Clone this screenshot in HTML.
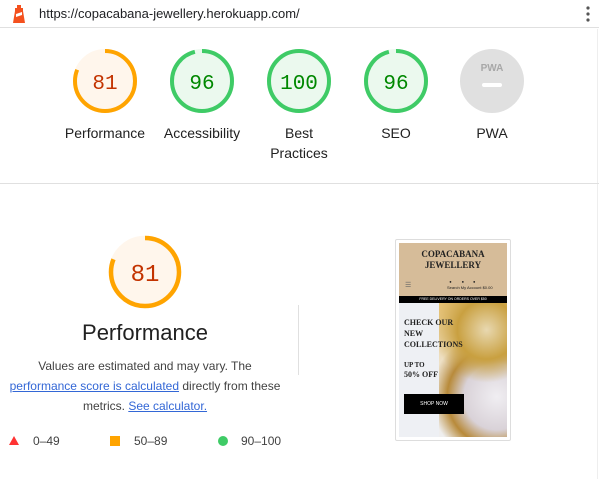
<!DOCTYPE html>
<html><head><meta charset="utf-8"><style>
*{margin:0;padding:0;box-sizing:border-box}
body{width:599px;height:479px;overflow:hidden;background:#fff;font-family:"Liberation Sans",Arial,sans-serif;position:relative;color:#212121}
.top{position:absolute;left:0;top:0;width:599px;height:28px;border-bottom:1px solid #e0e0e0}
.url{position:absolute;left:39px;top:6px;font-size:13px;color:#202124}
.abs{position:absolute}
.lbl{position:absolute;width:100px;text-align:center;font-size:14px;color:#212121;line-height:20px}
a{color:#3367d6}
</style></head><body>
<div class="top">
<svg class="abs" style="left:12px;top:5px" width="14" height="18" viewBox="0 0 14 18"><path d="M5 0h4v3h2v3H3V3h2z" fill="#f4511e"/><path d="M3 6h8l2 12H1z" fill="#f4511e"/><path d="M4 9l6-2v3l-6 2z" fill="#fff"/></svg>
<div class="url">https://copacabana-jewellery.herokuapp.com/</div>
<svg class="abs" style="left:586px;top:6px" width="4" height="16"><circle cx="2" cy="2" r="1.6" fill="#555"/><circle cx="2" cy="8" r="1.6" fill="#555"/><circle cx="2" cy="14" r="1.6" fill="#555"/></svg>
</div>
<div class="abs" style="left:597px;top:29px;width:1px;height:450px;background:#eee"></div>

<svg class="abs" style="left:0;top:0" width="599" height="479">
<g font-family="Liberation Mono, monospace" text-anchor="middle">
<circle cx="105" cy="81" r="30" fill="#fff6ec" stroke="#fff6ec" stroke-width="4"/>
<circle cx="105" cy="81" r="30" fill="none" stroke="#ffa400" stroke-width="4" stroke-dasharray="152.7 200" transform="rotate(-90 105 81)"/>
<text x="105" y="89" font-size="21" fill="#c33300">81</text>
<circle cx="202" cy="81" r="30" fill="#ebf9ee" stroke="#ebf9ee" stroke-width="4"/>
<circle cx="202" cy="81" r="30" fill="none" stroke="#3fcb66" stroke-width="4" stroke-dasharray="181 200" transform="rotate(-90 202 81)"/>
<text x="202" y="89" font-size="21" fill="#080">96</text>
<circle cx="299" cy="81" r="30" fill="#ebf9ee" stroke="#3fcb66" stroke-width="4"/>
<text x="299" y="89" font-size="21" fill="#080">100</text>
<circle cx="396" cy="81" r="30" fill="#ebf9ee" stroke="#ebf9ee" stroke-width="4"/>
<circle cx="396" cy="81" r="30" fill="none" stroke="#3fcb66" stroke-width="4" stroke-dasharray="181 200" transform="rotate(-90 396 81)"/>
<text x="396" y="89" font-size="21" fill="#080">96</text>
<circle cx="492" cy="81" r="32" fill="#e0e0e0"/>
<text x="492" y="71" font-size="10" font-weight="bold" font-family="Liberation Sans, sans-serif" fill="#a8a8a8">PWA</text>
<rect x="482" y="83" width="20" height="4" rx="2" fill="#fff"/>
<circle cx="145" cy="272" r="34" fill="#fff6ec" stroke="#fff6ec" stroke-width="4.5"/>
<circle cx="145" cy="272" r="34" fill="none" stroke="#ffa400" stroke-width="4.5" stroke-dasharray="173 220" transform="rotate(-90 145 272)"/>
<text x="145" y="281" font-size="24" fill="#c33300">81</text>
</g>
<rect x="0" y="183" width="599" height="1" fill="#e0e0e0"/>
<rect x="298" y="305" width="1" height="70" fill="#e0e0e0"/>
<path d="M9 445l5-9 5 9z" fill="#f33"/>
<rect x="110" y="436" width="10" height="10" fill="#ffa400"/>
<circle cx="223" cy="441" r="5" fill="#3fcb66"/>
</svg>
<div class="lbl" style="left:55px;top:123px">Performance</div>
<div class="lbl" style="left:152px;top:123px">Accessibility</div>
<div class="lbl" style="left:249px;top:123px">Best<br>Practices</div>
<div class="lbl" style="left:346px;top:123px">SEO</div>
<div class="lbl" style="left:442px;top:123px">PWA</div>

<div class="abs" style="left:45px;top:320px;width:200px;text-align:center;font-size:22px;color:#212121">Performance</div>
<div class="abs" style="left:-5px;top:356px;width:300px;text-align:center;font-size:12px;line-height:20px;color:#424242;white-space:nowrap">Values are estimated and may vary. The<br><a href="#">performance score is calculated</a> directly from these<br>metrics. <a href="#">See calculator.</a></div>
<div class="abs" style="left:33px;top:434px;font-size:12px;color:#424242">0–49</div>
<div class="abs" style="left:134px;top:434px;font-size:12px;color:#424242">50–89</div>
<div class="abs" style="left:241px;top:434px;font-size:12px;color:#424242">90–100</div>

<div class="abs" style="left:395px;top:239px;width:116px;height:202px;border:1px solid #ddd;border-radius:2px;background:#fff">
<div class="abs" style="left:3px;top:3px;width:108px;height:194px;overflow:hidden;background:#eef0f4">
<div class="abs" style="left:0;top:0;width:108px;height:53px;background:#d6bc99"></div>
<div class="abs" style="left:0;top:6px;width:108px;text-align:center;font-family:'Liberation Serif',serif;font-size:9px;line-height:11px;font-weight:bold;color:#222">COPACABANA<br>JEWELLERY</div>
<div class="abs" style="left:6px;top:38px;font-size:7px;color:#666">☰</div>
<div class="abs" style="left:48px;top:36px;font-size:4px;line-height:6px;color:#222;white-space:nowrap">&nbsp;&nbsp;●&nbsp;&nbsp;&nbsp;&nbsp;&nbsp;&nbsp;&nbsp;&nbsp;&nbsp;●&nbsp;&nbsp;&nbsp;&nbsp;&nbsp;&nbsp;&nbsp;&nbsp;●<br>Search My Account $0.00</div>
<div class="abs" style="left:0;top:53px;width:108px;height:7px;background:#000;color:#fff;font-size:3.5px;text-align:center;line-height:7px">FREE DELIVERY ON ORDERS OVER $50</div>
<div class="abs" style="left:40px;top:60px;width:68px;height:134px;background:radial-gradient(circle at 70% 20%,#e8d8b0 0,#c9a040 25%,transparent 45%),radial-gradient(circle at 85% 70%,#f0eef2 0,#d9d2d8 30%,#b88a3a 45%,transparent 60%),linear-gradient(160deg,#e6c070,#f1ece4 50%,#eef0f4)"></div>
<div class="abs" style="left:5px;top:74px;font-family:'Liberation Serif',serif;font-size:8px;line-height:11px;font-weight:bold;color:#222">CHECK OUR<br>NEW<br>COLLECTIONS</div>
<div class="abs" style="left:5px;top:117px;font-family:'Liberation Serif',serif;font-size:7px;line-height:10px;font-weight:bold;color:#222">UP TO<br><span style="font-size:8px">50% OFF</span></div>
<div class="abs" style="left:5px;top:151px;width:60px;height:20px;background:#000;color:#fff;font-size:5px;text-align:center;line-height:20px">SHOP NOW</div>
</div></div>
</body></html>
